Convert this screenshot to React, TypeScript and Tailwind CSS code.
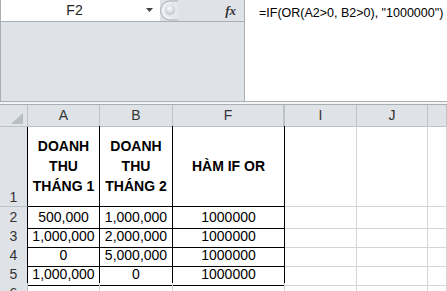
/* Excel-style sheet: name box + expanded formula bar + small grid */

const COLS = ["A", "B", "F", "I", "J", ""] as const;

const ROWS = [
  { n: "2", a: "500,000", b: "1,000,000", f: "1000000" },
  { n: "3", a: "1,000,000", b: "2,000,000", f: "1000000" },
  { n: "4", a: "0", b: "5,000,000", f: "1000000" },
  { n: "5", a: "1,000,000", b: "0", f: "1000000" },
] as const;

const GRID = "grid grid-cols-[28px_72px_73px_112px_72px_71px_1fr]";

function RowHead({ n, black, bottom }: { n: string; black?: boolean; bottom?: boolean }) {
  return (
    <div
      className={`bg-[#dfe3e8] border-b border-b-[#bcc2c9] border-r text-[14px] text-[#333] flex justify-center ${
        black ? "border-r-black" : "border-r-[#bcc2c9]"
      } ${bottom ? "items-end leading-[17px]" : "items-center"}`}
    >
      {n}
    </div>
  );
}

function Cell({ children, black = true }: { children?: React.ReactNode; black?: boolean }) {
  return (
    <div
      className={`border-r border-b flex items-center justify-center text-[14px] text-black ${
        black ? "border-black" : "border-[#d4d4d4]"
      }`}
    >
      {children}
    </div>
  );
}

function Knob() {
  return (
    <svg width="18" height="21" viewBox="0 0 18 21" className="shrink-0">
      <defs>
        <radialGradient id="kg" cx="0.45" cy="0.35" r="0.7">
          <stop offset="0" stopColor="#ffffff" />
          <stop offset="1" stopColor="#b9bec5" />
        </radialGradient>
      </defs>
      <path d="M18 1 H10 A9.5 9.5 0 0 0 10 20 H18" fill="#e4e7eb" stroke="#a9aeb5" strokeWidth="1" />
      <path d="M11 2.5 A8 8 0 0 0 11 18.5" fill="none" stroke="#ffffff" strokeWidth="1" />
      <circle cx="10" cy="10" r="5" fill="url(#kg)" />
    </svg>
  );
}

export default function App() {
  return (
    <div className="w-[447px] h-[291px] overflow-hidden bg-white font-['Liberation_Sans',Arial,sans-serif]">
      {/* name box + formula bar */}
      <div className="flex h-[102px] border-b border-[#a9aeb5]">
        <div className="w-[244px] flex flex-col bg-[#dfe2e7] border-l border-[#a9aeb5]">
          <div className="h-[22px] flex items-stretch border-b border-[#a9aeb5]">
            <div className="w-[159px] bg-white flex items-center">
              <span className="flex-1 text-center text-[14px] text-[#222] pl-[2px]">F2</span>
              <svg width="8" height="5" viewBox="0 0 8 5" className="mr-[6px]">
                <path d="M0 0 H7 L3.5 4 Z" fill="#444" />
              </svg>
            </div>
            <Knob />
            <div className="flex-1 flex items-center justify-end pr-[8px]">
              <span className="font-['Liberation_Serif',serif] italic font-bold text-[13px] text-[#333]">fx</span>
            </div>
          </div>
        </div>
        <div className="flex-1 bg-white border-l border-[#a9aeb5] pl-[14px] pt-[4px] text-[12.5px] text-black whitespace-nowrap">
          =IF(OR(A2&gt;0, B2&gt;0), "1000000")
        </div>
      </div>
      <div className="h-[2px] bg-[#f4f5f7]" />

      {/* column headers */}
      <div className={`${GRID} h-[22px] border-t border-[#a9aeb5] bg-[#dfe3e8]`}>
        <div className="relative border-r border-b border-[#bcc2c9]">
          <svg width="12" height="11" viewBox="0 0 12 11" className="absolute right-[4px] bottom-[2px]">
            <path d="M12 0 V11 H0 Z" fill="#b9bec5" />
          </svg>
        </div>
        {COLS.map((c, i) => (
          <div
            key={i}
            className={`flex items-center justify-center text-[14px] text-[#333] border-b border-[#bcc2c9] ${
              i === 2 ? "border-r-2" : "border-r"
            }`}
          >
            {c}
          </div>
        ))}
      </div>

      {/* row 1: headings */}
      <div className={`${GRID} h-[81px]`}>
        <RowHead n="1" black bottom />
        <Cell>
          <div className="font-bold text-center leading-[20px]">DOANH<br />THU<br />THÁNG 1</div>
        </Cell>
        <Cell>
          <div className="font-bold text-center leading-[20px]">DOANH<br />THU<br />THÁNG 2</div>
        </Cell>
        <Cell>
          <span className="font-bold">HÀM IF OR</span>
        </Cell>
        <Cell black={false} />
        <Cell black={false} />
        <Cell black={false} />
      </div>

      {ROWS.map((r) => (
        <div key={r.n} className={`${GRID} h-[19px]`}>
          <RowHead n={r.n} black />
          <Cell>{r.a}</Cell>
          <Cell>{r.b}</Cell>
          <Cell>{r.f}</Cell>
          <Cell black={false} />
          <Cell black={false} />
          <Cell black={false} />
        </div>
      ))}

      <div className={`${GRID} h-[19px]`}>
        <RowHead n="6" />
        {[0, 1, 2, 3, 4, 5].map((i) => (
          <Cell key={i} black={false} />
        ))}
      </div>
    </div>
  );
}
